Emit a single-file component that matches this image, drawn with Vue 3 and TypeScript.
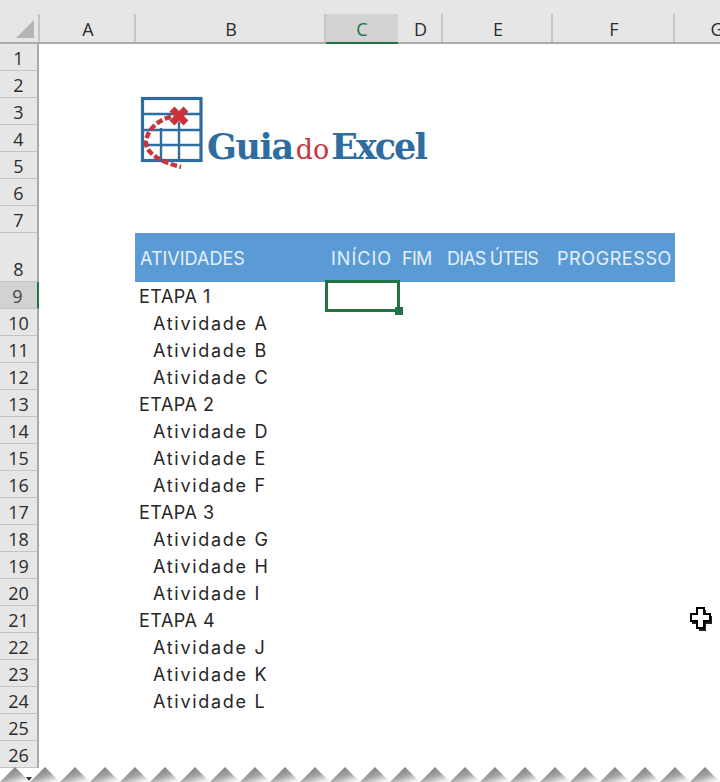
<script setup lang="ts">
const columns = [
  { name: 'A', width: 96 },
  { name: 'B', width: 190 },
  { name: 'C', width: 72, active: true },
  { name: 'D', width: 45 },
  { name: 'E', width: 110 },
  { name: 'F', width: 122 },
  { name: 'G', width: 84 },
]

const rowHeaders = Array.from({ length: 26 }, (_, i) => i + 1)

// tracking per heading, the sheet's font sets these wider or tighter than ours
const headings = [
  { title: 'ATIVIDADES', tracking: 0 },
  { title: 'INÍCIO', tracking: 1 },
  { title: 'FIM', tracking: -0.7 },
  { title: 'DIAS ÚTEIS', tracking: -0.8 },
  { title: 'PROGRESSO', tracking: 0.6 },
]

const tasks = [
  { label: 'ETAPA 1' },
  { label: 'Atividade A', sub: true },
  { label: 'Atividade B', sub: true },
  { label: 'Atividade C', sub: true },
  { label: 'ETAPA 2' },
  { label: 'Atividade D', sub: true },
  { label: 'Atividade E', sub: true },
  { label: 'Atividade F', sub: true },
  { label: 'ETAPA 3' },
  { label: 'Atividade G', sub: true },
  { label: 'Atividade H', sub: true },
  { label: 'Atividade I', sub: true },
  { label: 'ETAPA 4' },
  { label: 'Atividade J', sub: true },
  { label: 'Atividade K', sub: true },
  { label: 'Atividade L', sub: true },
]
</script>

<template>
  <div class="excel">
    <div class="top-strip"></div>

    <div class="col-bar">
      <div class="corner"><span class="corner-mark"></span></div>
      <div
        v-for="col in columns"
        :key="col.name"
        class="col-head"
        :class="{ active: col.active }"
        :style="{ width: col.width + 'px' }"
      >
        {{ col.name }}
      </div>
    </div>

    <div class="body">
      <div class="row-bar">
        <div
          v-for="n in rowHeaders"
          :key="n"
          class="row-head"
          :class="{ tall: n === 8, active: n === 9 }"
        >
          {{ n }}
        </div>
      </div>

      <div class="sheet">
        <div class="logo">
          <svg class="logo-icon" width="64" height="74" viewBox="0 0 64 74">
            <g fill="none" stroke="#2f6c9f">
              <rect x="2.5" y="3.5" width="58.5" height="62" stroke-width="3.2" />
              <path stroke-width="2.4" d="M2 19h59M2 35h59M2 50h59M21 33v32M39 27v38" />
            </g>
            <path
              fill="none"
              stroke="#c9343c"
              stroke-width="4.4"
              stroke-dasharray="6.5 2.6"
              d="M31 22C20 24 8 33 6 46c-1 14 19 22 35 26"
            />
            <path fill="none" stroke="#c9343c" stroke-width="7" d="M32 14l14 14M46 14L32 28" />
          </svg>
          <div class="logo-text">Guia<span class="logo-do">do</span><span class="logo-excel">Excel</span></div>
        </div>

        <div class="band">
          <div
            v-for="h in headings"
            :key="h.title"
            class="band-cell"
            :style="{ letterSpacing: h.tracking + 'px' }"
          >
            {{ h.title }}
          </div>
        </div>

        <div class="tasks">
          <div class="selection"><span class="handle"></span></div>
          <div v-for="task in tasks" :key="task.label" class="task" :class="{ sub: task.sub }">
            {{ task.label }}
          </div>
        </div>
      </div>
    </div>

    <svg class="cursor" width="26" height="26" viewBox="0 0 26 26">
      <path d="M10 3h7v6h6v8h-6v7h-7v-7H3V9h7z" fill="#222" />
      <path d="M8 1h7v6h6v7h-6v7H8v-7H2V7h6z" fill="#fff" stroke="#000" stroke-width="2" />
    </svg>

    <svg class="torn" width="720" height="16" viewBox="0 0 720 16">
      <defs>
        <linearGradient id="tornFade" x1="0.15" y1="0.1" x2="0.75" y2="1">
          <stop offset="0" stop-color="#7d7d7d" />
          <stop offset="0.55" stop-color="#a3a3a3" />
          <stop offset="1" stop-color="#f4f4f4" />
        </linearGradient>
      </defs>
      <path
        v-for="k in 24"
        :key="k"
        :d="`M${(k - 1) * 30} 16L${(k - 1) * 30 + 15} 1L${k * 30} 16z`"
        fill="url(#tornFade)"
      />
    </svg>
    <span class="scroll-arrow"></span>
  </div>
</template>

<style scoped>
.excel {
  position: relative;
  width: 720px;
  height: 782px;
  overflow: hidden;
  background: #fff;
  font-family: "Open Sans", sans-serif;
  color: #2c2c2c;
}
.top-strip {
  height: 14px;
  background: #e6e6e6;
}
.col-bar {
  display: flex;
  height: 30px;
  background: #e6e6e6;
  border-bottom: 2px solid #ababab;
  box-sizing: border-box;
}
.corner {
  position: relative;
  width: 40px;
  flex: none;
  box-sizing: border-box;
  border-right: 2px solid #c4c4c4;
}
.corner-mark {
  position: absolute;
  right: 4px;
  bottom: 4px;
  width: 0;
  height: 0;
  border-style: solid;
  border-width: 0 0 18px 18px;
  border-color: transparent transparent #b5b5b5 transparent;
}
.col-head {
  flex: none;
  box-sizing: border-box;
  border-right: 2px solid #c6c6c6;
  padding-left: 2px;
  text-align: center;
  font-size: 18px;
  line-height: 30px;
  height: 28px;
}
.col-head.active {
  height: 30px;
  padding-left: 0;
  background: #d2d2d2;
  border-right: 0;
  border-bottom: 2px solid #217346;
  color: #217346;
}
.body {
  display: flex;
}
.row-bar {
  width: 39px;
  flex: none;
  box-sizing: border-box;
  background: #e6e6e6;
  border-right: 2px solid #ababab;
}
.row-head {
  height: 27px;
  box-sizing: border-box;
  border-bottom: 1px solid #c4c4c4;
  text-align: center;
  font-size: 18px;
  line-height: 28px;
}
.row-head.tall {
  height: 49px;
  padding-top: 22px;
}
.row-head.active {
  background: #d2d2d2;
  border-right: 2px solid #217346;
  margin-right: -2px;
  padding-right: 2px;
  color: #444;
}
.sheet {
  flex: 1;
  min-width: 0;
  padding-left: 96px;
}
.logo {
  display: flex;
  align-items: flex-end;
  height: 189px;
  box-sizing: border-box;
  padding: 51px 0 64px 5px;
}
.logo-icon {
  flex: none;
  margin-right: 3px;
}
.logo-text {
  font-family: "DejaVu Serif", serif;
  font-weight: 700;
  font-size: 35px;
  line-height: 34px;
  letter-spacing: -1.4px;
  color: #2f6c9f;
  white-space: nowrap;
  margin-bottom: 2px;
}
.logo-do {
  font-weight: 400;
  font-size: 27px;
  letter-spacing: 0;
  color: #c9343c;
  margin: 0 2px 0 3px;
}
.logo-excel {
  letter-spacing: -2px;
}
.band {
  display: grid;
  grid-template-columns: 191px 71px 45px 110px 123px;
  width: 540px;
  height: 49px;
  background: #5b9bd5;
  color: #e6f0fa;
  font-family: Inter, sans-serif;
  font-size: 18px;
  line-height: 51px;
}
.band-cell {
  padding-left: 5px;
  white-space: nowrap;
}
.tasks {
  position: relative;
  padding-top: 1px;
}
.task {
  height: 27px;
  padding-left: 4px;
  font-family: Inter, sans-serif;
  font-size: 18px;
  letter-spacing: 0.5px;
  line-height: 27px;
  color: #262626;
}
.task.sub {
  padding-left: 18px;
  letter-spacing: 1.7px;
}
.selection {
  position: absolute;
  left: 190px;
  top: -2px;
  width: 75px;
  height: 32px;
  box-sizing: border-box;
  border: 3px solid #217346;
}
.handle {
  position: absolute;
  right: -6px;
  bottom: -6px;
  width: 8px;
  height: 8px;
  background: #217346;
}
.cursor {
  position: absolute;
  left: 689px;
  top: 607px;
}
.torn {
  position: absolute;
  left: 0;
  bottom: 0;
}
.scroll-arrow {
  position: absolute;
  left: 26px;
  top: 777px;
  width: 0;
  height: 0;
  border-style: solid;
  border-width: 4px 3px 0 3px;
  border-color: #333 transparent transparent transparent;
}
</style>
